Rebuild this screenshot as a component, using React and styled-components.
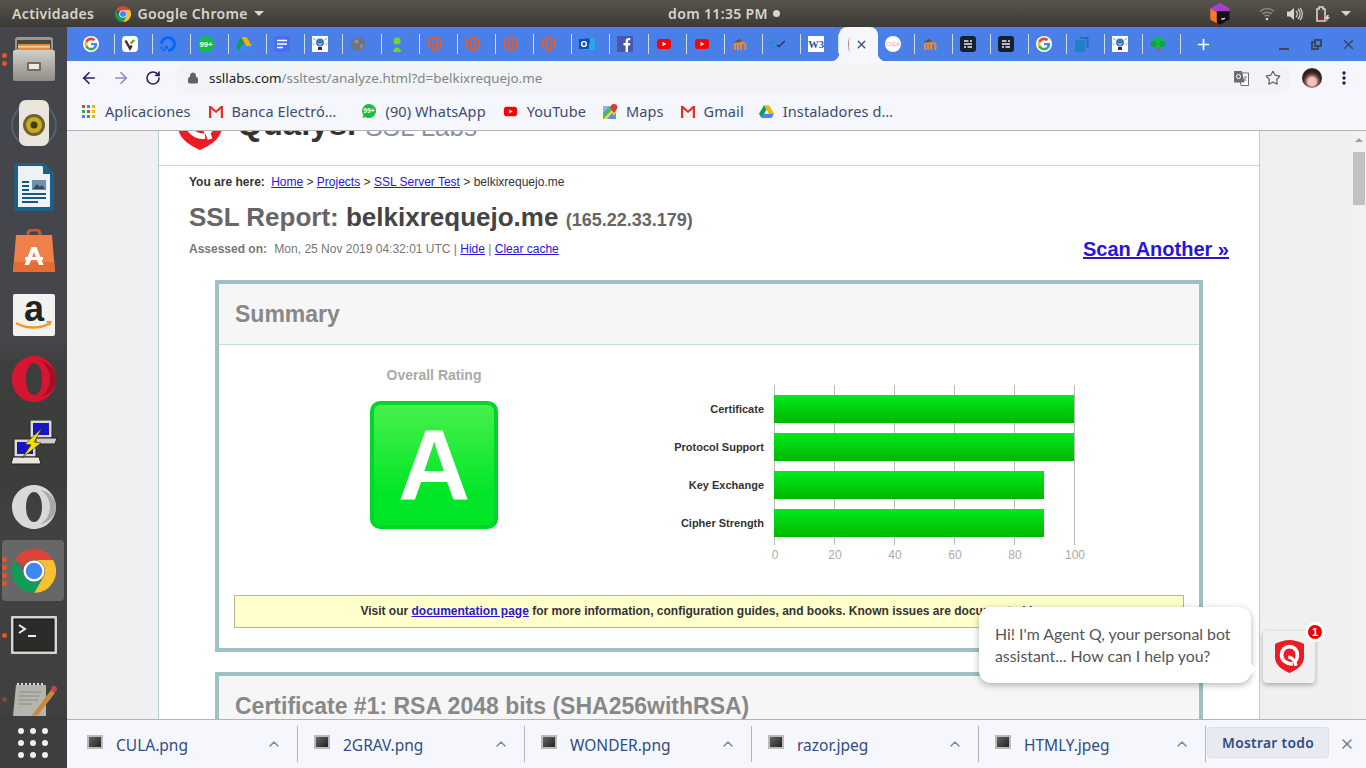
import React from 'react';
import styled, { createGlobalStyle } from 'styled-components';
import { ArrowLeft, ArrowRight, RotateCw, Lock, Star, X, Plus, ChevronUp } from 'lucide-react';
import { SiMagento, SiDigitalocean } from 'react-icons/si';

const GlobalStyle = createGlobalStyle`
  html, body { margin: 0; padding: 0; height: 100%; overflow: hidden; }
  #root { height: 100%; }
  * { box-sizing: border-box; }
`;

const UI_FONT = `"Noto Sans", "Open Sans", sans-serif`;
const PAGE_FONT = `"Liberation Sans", Arial, sans-serif`;

const Screen = styled.div`
  width: 1366px;
  height: 768px;
  display: grid;
  grid-template-columns: 67px 1fr;
  grid-template-rows: 27px 1fr;
  overflow: hidden;
  font-family: ${UI_FONT};
`;

/* ---------- gnome top bar ---------- */
const TopBar = styled.div`
  grid-column: 1 / 3;
  display: grid;
  grid-template-columns: 1fr auto 1fr;
  align-items: center;
  background: linear-gradient(#57544d, #3c3a36);
  color: #d9d5cb;
  font-size: 14px;
  font-weight: 600;
  letter-spacing: 0.35px;
`;
const TopLeft = styled.div`
  display: flex;
  align-items: center;
  padding-left: 12px;
`;
const AppMenu = styled.div`
  display: flex;
  align-items: center;
  gap: 6px;
  margin-left: 21px;
`;
const Caret = styled.span`
  width: 0;
  height: 0;
  border-left: 5px solid transparent;
  border-right: 5px solid transparent;
  border-top: 5px solid #d9d5cb;
`;
const Clock = styled.div`
  display: flex;
  align-items: center;
  gap: 5px;
  padding-left: 82px;
  &::after {
    content: '';
    width: 7px;
    height: 7px;
    border-radius: 50%;
    background: #d9d5cb;
  }
`;
const TopRight = styled.div`
  display: flex;
  justify-content: flex-end;
  align-items: center;
  padding-right: 15px;
`;
const Tray = styled.div`
  display: flex;
  margin-left: ${(p) => p.$ml || 0}px;
`;

/* ---------- launcher ---------- */
const Dock = styled.div`
  display: flex;
  flex-direction: column;
  background: linear-gradient(#45464c 0%, #45454c 42%, #3c3f3d 46%, #3b3d3a 60%, #434243 70%, #403f3f 100%);
  min-height: 0;
`;
const DockList = styled.div`
  flex: 1;
  min-height: 0;
  overflow: hidden;
`;
const DockItem = styled.div`
  position: relative;
  height: 64px;
  display: flex;
  align-items: center;
  justify-content: center;
  &::before {
    content: '';
    position: absolute;
    inset: 1px 3px 2px 2px;
    border-radius: 4px;
    background: ${(p) => (p.$active ? 'rgba(255,255,255,0.2)' : 'transparent')};
  }
  & > svg { position: relative; }
`;
const Pips = styled.div`
  position: absolute;
  left: 2px;
  top: 0;
  bottom: 0;
  display: flex;
  flex-direction: column;
  justify-content: center;
  gap: 3px;
`;
const Pip = styled.span`
  width: 5px;
  height: 5px;
  border-radius: 50%;
  background: #e95420;
  opacity: ${(p) => p.$dim || 1};
`;
const ShowApps = styled.div`
  height: 52px;
  flex: none;
  display: grid;
  grid-template-columns: repeat(3, 6px);
  gap: 6px;
  padding: 2px 0 0 18px;
  align-content: center;
  background: #3f3e3e;
`;
const AppDot = styled.span`
  width: 6px;
  height: 6px;
  border-radius: 50%;
  background: #eee;
`;

/* ---------- chrome ---------- */
const Browser = styled.div`
  display: flex;
  flex-direction: column;
  min-width: 0;
  min-height: 0;
`;
const TabStrip = styled.div`
  height: 34px;
  flex: none;
  background: #4a7fe8;
  display: flex;
  padding-left: 9.4px;
`;
const Tab = styled.div`
  position: relative;
  width: ${(p) => p.$w || 38.15}px;
  flex: none;
  display: flex;
  align-items: center;
  justify-content: center;
  padding-right: 8px;
  &::after {
    content: '';
    position: absolute;
    right: 0;
    top: 7px;
    width: 1px;
    height: 20px;
    background: #cddcf8;
  }
`;
const ActiveTab = styled.div`
  position: relative;
  width: 39px;
  flex: none;
  background: #f5f7fc;
  border-radius: 8px 8px 0 0;
  display: flex;
  align-items: center;
  padding-left: 9px;
  gap: 3px;
  color: #3d4a68;
  &::before, &::after {
    content: '';
    position: absolute;
    bottom: 0;
    width: 8px;
    height: 8px;
    background: radial-gradient(circle at 0 0, #4a7fe8 8px, #f5f7fc 8.5px);
  }
  &::before { left: -8px; }
  &::after { right: -8px; transform: scaleX(-1); }
`;
const CutIcon = styled.span`
  width: 4px;
  height: 15px;
  border-left: 1.5px solid #c08a80;
  border-radius: 50% 0 0 50%;
`;
const TabSpacer = styled.div`
  flex: 1;
`;
const NewTab = styled.div`
  width: 44px;
  display: flex;
  align-items: center;
  justify-content: center;
  color: #fff;
`;
const WindowButtons = styled.div`
  display: flex;
  align-items: center;
  gap: 16px;
  padding-right: 10px;
  color: #3a4763;
`;
const WinButton = styled.div`
  width: 16px;
  height: 16px;
  display: flex;
  align-items: center;
  justify-content: center;
`;
const MinLine = styled.span`
  width: 10px;
  height: 2px;
  margin-top: 9px;
  background: #3a4763;
`;

const Toolbar = styled.div`
  height: 33px;
  flex: none;
  background: #f5f7fc;
  display: flex;
  align-items: center;
  padding: 0 20px 0 6px;
  color: #2b1a5e;
`;
const NavButton = styled.div`
  width: 32px;
  display: flex;
  justify-content: center;
  color: ${(p) => p.$color || '#2b1a5e'};
`;
const Omnibox = styled.div`
  flex: 1;
  height: 28px;
  margin: 1px 0 0 6px;
  border-radius: 14px;
  background: #f1f3f4;
  display: flex;
  align-items: center;
  padding: 0 10px 0 12px;
`;
const Url = styled.div`
  flex: 1;
  margin-left: 10px;
  font-size: 13.4px;
  color: #80868b;
  white-space: nowrap;
  & b { font-weight: 400; color: #202124; }
`;
const OmniIcon = styled.div`
  margin-left: ${(p) => p.$ml || 14}px;
  display: flex;
  color: #5f6368;
`;
const Avatar = styled.div`
  width: 20px;
  height: 20px;
  margin-left: 11px;
  flex: none;
  border-radius: 50%;
  background: radial-gradient(circle at 50% 68%, #f0c3ba 0 24%, #a86f66 34%, #3a2624 52%, #2c1d1c 74%, #a08d8a 100%);
`;
const MenuDots = styled.div`
  margin-left: 20px;
  flex: none;
  display: flex;
  color: #2b1a5e;
`;

const Bookmarks = styled.div`
  height: 36px;
  flex: none;
  background: #f5f7fc;
  display: flex;
  align-items: center;
  padding: 0 0 2px 15px;
  font-size: 14.5px;
  letter-spacing: 0.1px;
  color: #3c4b72;
`;
const Bookmark = styled.div`
  display: flex;
  align-items: center;
  gap: ${(p) => p.$inner || 9}px;
  margin-right: ${(p) => p.$gap || 17}px;
  white-space: nowrap;
`;

/* ---------- page ---------- */
const Viewport = styled.div`
  flex: 1;
  min-height: 0;
  position: relative;
  display: grid;
  grid-template-columns: 91px 1102px 1fr 14px;
  border-top: 1px solid #b4b4b4;
  border-bottom: 1px solid #b4b4b4;
  background: #f0f0f0;
  overflow: hidden;
  font-family: ${PAGE_FONT};
`;
const Gutter = styled.div`
  background: #f0f0f0;
`;
const Sheet = styled.div`
  background: #fff;
  border-left: 1px solid #b3ced6;
  border-right: 1px solid #b3ced6;
`;
const Masthead = styled.div`
  height: 35px;
  border-bottom: 1px solid #c9d6da;
  overflow: hidden;
  display: flex;
  align-items: flex-start;
  padding-left: 19px;
`;
const LogoShield = styled.div`
  margin-top: -31px;
  flex: none;
`;
const QualysWord = styled.span`
  margin: -29px 0 0 15px;
  font-size: 33px;
  line-height: 44px;
  font-weight: 700;
  color: #333;
`;
const LabsWord = styled.span`
  margin: -22px 0 0 9px;
  font-size: 26px;
  line-height: 36px;
  color: #8793ad;
`;
const Content = styled.div`
  padding: 9px 30px 0;
  font-size: 12px;
`;
const Crumbs = styled.div`
  line-height: 14px;
  color: #333;
  & strong { margin-right: 3px; }
`;
const PageLink = styled.a`
  color: #2a14d8;
  text-decoration: underline;
`;
const ReportTitle = styled.h1`
  margin: 13px 0 0;
  font-size: 26px;
  line-height: 30px;
  font-weight: 700;
  color: #666;
  & b { color: #444; }
  & small { font-size: 18px; color: #666; }
`;
const AssessedRow = styled.div`
  display: flex;
  justify-content: space-between;
  align-items: flex-start;
  margin-top: 7px;
  line-height: 14px;
  color: #777;
  & strong { margin-right: 4px; }
`;
const ScanLink = styled(PageLink)`
  font-size: 20px;
  font-weight: 700;
  line-height: 24px;
  margin-top: -5px;
`;
const ReportBox = styled.section`
  width: 988px;
  margin: ${(p) => p.$top || 0}px 0 0 26px;
  border: 4px solid #9cc2c4;
  background: #fff;
`;
const BoxHeader = styled.div`
  height: 61px;
  padding: 0 16px;
  display: flex;
  align-items: center;
  background: #f6f6f6;
  border-bottom: 1px solid #c6dcdc;
  font-size: 23px;
  font-weight: 700;
  color: #888;
`;
const SummaryBody = styled.div`
  padding: 0 15px 20px;
`;
const SummaryRow = styled.div`
  height: 250px;
  display: flex;
  align-items: flex-start;
`;
const RatingColumn = styled.div`
  width: 400px;
  padding-top: 22px;
  display: flex;
  flex-direction: column;
  align-items: center;
  font-size: 14px;
  font-weight: 700;
  color: #aaa;
`;
const GradeBox = styled.div`
  width: 128px;
  height: 128px;
  margin-top: 18px;
  border: 4px solid #00d62a;
  border-radius: 10px;
  background: linear-gradient(#48f04c, #00e626 75%);
  color: #fff;
  font-size: 100px;
  line-height: 120px;
  text-align: center;
`;
const ChartWrap = styled.div`
  flex: none;
  margin-left: 16px;
  margin-top: 40px;
  display: flex;
`;
const Notice = styled.div`
  height: 33px;
  padding-bottom: 2px;
  border: 1px solid #b5b59c;
  background: #ffffcc;
  display: flex;
  align-items: center;
  justify-content: center;
  font-weight: 700;
  color: #333;
  white-space: nowrap;
`;

/* ---------- scrollbars, chat ---------- */
const Scrollbar = styled.div`
  position: relative;
  background: #f1f1f1;
  display: flex;
  flex-direction: column;
  align-items: center;
  justify-content: space-between;
  padding: 7px 0 6px;
`;
const ScrollThumb = styled.div`
  position: absolute;
  top: 21px;
  left: 1px;
  right: 1px;
  height: 53px;
  background: #c1c1c1;
`;
const ScrollArrow = styled.span`
  width: 0;
  height: 0;
  border-left: 4px solid transparent;
  border-right: 4px solid transparent;
  ${(p) => (p.$up ? 'border-bottom: 4px solid #a0a0a0;' : 'border-top: 4px solid #505050;')}
`;
const ChatLayer = styled.div`
  position: absolute;
  right: 51px;
  bottom: 36px;
  display: flex;
  align-items: flex-end;
  gap: 12px;
`;
const Bubble = styled.div`
  position: relative;
  width: 272px;
  height: 76px;
  padding: 16px 16px;
  background: #fff;
  border-radius: 12px;
  box-shadow: 0 2px 7px rgba(0, 0, 0, 0.3);
  font-family: Lato, sans-serif;
  font-size: 15.85px;
  line-height: 22px;
  color: #555;
  white-space: nowrap;
  &::after {
    content: '';
    position: absolute;
    right: -6px;
    top: 56px;
    width: 0;
    height: 0;
    border-top: 6px solid transparent;
    border-bottom: 6px solid transparent;
    border-left: 7px solid #fff;
  }
`;
const BotButton = styled.div`
  position: relative;
  width: 52px;
  height: 52px;
  border-radius: 4px;
  background: #f0f0f0;
  box-shadow: 0 2px 5px rgba(0, 0, 0, 0.3);
  display: flex;
  align-items: center;
  justify-content: center;
`;
const Badge = styled.span`
  position: absolute;
  top: -9px;
  right: -10px;
  width: 20px;
  height: 20px;
  border-radius: 50%;
  border: 3px solid #fff;
  background: #f00000;
  color: #fff;
  font-family: ${PAGE_FONT};
  font-size: 11px;
  font-weight: 700;
  line-height: 14px;
  text-align: center;
`;

/* ---------- download shelf ---------- */
const Shelf = styled.div`
  height: 48px;
  flex: none;
  background: #f5f7fc;
  display: flex;
  align-items: center;
  padding-left: 4px;
  font-size: 15.5px;
  color: #2f4d86;
`;
const Download = styled.div`
  width: 227px;
  height: 36px;
  flex: none;
  display: flex;
  align-items: center;
  padding: 0 15px 0 16px;
  border-right: 1px solid #b3b3cc;
`;
const FileThumb = styled.span`
  width: 16px;
  height: 14px;
  flex: none;
  margin: -4px 13px 0 0;
  border: 2px solid #bbb;
  background: linear-gradient(135deg, #666, #222);
`;
const FileName = styled.span`
  flex: 1;
  padding-top: 2px;
`;
const ShowAll = styled.div`
  width: 122px;
  height: 31px;
  margin: -3px 0 0 1px;
  flex: none;
  border: 1px solid #dfe1e8;
  border-radius: 3px;
  background: #e8eaf1;
  display: flex;
  align-items: center;
  justify-content: center;
  font-size: 13.8px;
  font-weight: 600;
  letter-spacing: 0.3px;
  color: #2f4d86;
`;
const ShelfClose = styled.div`
  margin-left: 10px;
  display: flex;
  color: #6b7a9c;
`;

/* ---------- drawings ---------- */
const GoogleG = () => (
  <svg width="16" height="16" viewBox="-6 -6 60 60">
    <circle cx="24" cy="24" r="30" fill="#fff" />
    <path fill="#EA4335" d="M24 9.5c3.54 0 6.71 1.22 9.21 3.6l6.85-6.85C35.9 2.38 30.47 0 24 0 14.62 0 6.51 5.38 2.56 13.22l7.98 6.19C12.43 13.72 17.74 9.5 24 9.5z" />
    <path fill="#4285F4" d="M46.98 24.55c0-1.57-.15-3.09-.38-4.55H24v9.02h12.94c-.58 2.96-2.26 5.48-4.78 7.18l7.73 6c4.51-4.18 7.09-10.36 7.09-17.65z" />
    <path fill="#FBBC05" d="M10.53 28.59c-.48-1.45-.76-2.99-.76-4.59s.27-3.14.76-4.59l-7.98-6.19C.92 16.46 0 20.12 0 24c0 3.88.92 7.54 2.56 10.78l7.97-6.19z" />
    <path fill="#34A853" d="M24 48c6.48 0 11.93-2.13 15.89-5.81l-7.73-6c-2.15 1.45-4.92 2.3-8.16 2.3-6.26 0-11.57-4.22-13.47-9.91l-7.98 6.19C6.51 42.62 14.62 48 24 48z" />
  </svg>
);
const ChromeLogo = ({ size = 16 }) => (
  <svg width={size} height={size} viewBox="0 0 48 48">
    <path fill="#db4437" d="M24 0A24 24 0 0 1 44.8 12H24a12 12 0 0 0-10.4 6L3.2 12A24 24 0 0 1 24 0z" />
    <path fill="#fbc02d" d="M44.8 12A24 24 0 0 1 24 48L34.4 30A12 12 0 0 0 24 12z" />
    <path fill="#0f9d58" d="M3.2 12A24 24 0 0 0 24 48L34.4 30A12 12 0 0 1 13.6 30z" />
    <circle cx="24" cy="24" r="11.5" fill="#fff" />
    <circle cx="24" cy="24" r="9" fill="#4285f4" />
  </svg>
);
const VivaldiIcon = () => (
  <svg width="16" height="16" viewBox="0 0 16 16">
    <rect width="16" height="16" rx="4" fill="#fff" />
    <path d="M3.5 4.5 8 12.5l1.6-3" fill="none" stroke="#4a2a22" strokeWidth="2.4" />
    <path d="M8.6 7.5 12.3 4" fill="none" stroke="#6aa02c" strokeWidth="2.4" />
  </svg>
);
const WhatsAppBadge = ({ size = 16 }) => (
  <svg width={size} height={size} viewBox="0 0 16 16">
    <path d="M8 0a8 8 0 1 1-4 14.9L.6 16l1-3.4A8 8 0 0 1 8 0z" fill="#0dc143" />
    <text x="8" y="10.8" textAnchor="middle" fontSize="7.6" fontWeight="700" fontFamily="Liberation Sans" fill="#fff">99+</text>
  </svg>
);
const DriveIcon = ({ size = 16 }) => (
  <svg width={size} height={size} viewBox="0 0 24 24">
    <path d="M8 2h8l8 13.5h-8z" fill="#f4b400" />
    <path d="M8 2 0 15.5l4 7 8-13.5z" fill="#0f9d58" />
    <path d="M4 22.5l4-7h16l-4 7z" fill="#4285f4" />
  </svg>
);
const DocsIcon = () => (
  <svg width="16" height="16" viewBox="0 0 16 16">
    <rect width="16" height="16" rx="1.5" fill="#4a6cf0" />
    <path d="M3 4.5h10M3 8h10M3 11.5h6" stroke="#fff" strokeWidth="1.6" />
  </svg>
);
const BulbIcon = () => (
  <svg width="16" height="16" viewBox="0 0 16 16">
    <rect width="16" height="16" fill="#fff" />
    <circle cx="8" cy="6.5" r="4" fill="#3f74c8" />
    <path d="M6 7l2 2 2-2" stroke="#cfe0f8" fill="none" />
    <rect x="6" y="11" width="4" height="3" fill="#333" />
    <path d="M1.5 2.5l2 1.5M14.5 2.5l-2 1.5M1 8h1.5M15 8h-1.5" stroke="#555" strokeWidth="0.8" />
  </svg>
);
const GlobeIcon = () => (
  <svg width="16" height="16" viewBox="0 0 16 16">
    <circle cx="8" cy="8" r="7" fill="#6f7480" />
    <path d="M5 4c2-1 4 0 4 2S6 8 5 7 4 5 5 4zM10 9l3-1-1 4-2 1z" fill="#8e929b" />
  </svg>
);
const PersonIcon = () => (
  <svg width="16" height="16" viewBox="0 0 16 16">
    <circle cx="8" cy="5" r="3.6" fill="#6fd62a" />
    <path d="M4 16c0-3 2-4.5 4-4.5s4 1.500 4 4.500z" fill="#6fd62a" />
  </svg>
);
const Magento = () => <SiMagento size={16} color="#ee5b1f" />;
const OutlookIcon = () => (
  <svg width="16" height="16" viewBox="0 0 16 16">
    <path d="M6 2h10v12H6z" fill="#28a8ea" />
    <path d="M6 2h5v6H6z" fill="#0078d4" />
    <rect y="3" width="10" height="10" rx="1" fill="#0f4fb8" />
    <circle cx="5" cy="8" r="2.4" fill="none" stroke="#fff" strokeWidth="1.4" />
  </svg>
);
const FacebookIcon = () => (
  <svg width="16" height="16" viewBox="0 0 16 16">
    <rect width="16" height="16" fill="#4a55b0" />
    <path d="M11 16V9.500h2l.3-2.500H11V5.500c0-.8.3-1.200 1.200-1.200h1.100V2.100C12.900 2 12.300 2 11.600 2 9.800 2 8.600 3 8.600 5.100V7H6.500v2.500h2.100V16z" fill="#fff" />
  </svg>
);
const YouTubeIcon = ({ size = 16 }) => (
  <svg width={size} height={size} viewBox="0 0 16 16">
    <rect x="1" y="3" width="14" height="10" rx="3" fill="#f00" />
    <path d="M6.500 5.800v4.400L10.300 8z" fill="#fff" />
  </svg>
);
const MoodleIcon = () => (
  <svg width="16" height="16" viewBox="0 0 16 16">
    <path d="M2 6l5-3 3 1.500-5 2.500z" fill="#555" />
    <path d="M3 14V9c0-1.500 2-2 3-1 1-1.200 3-1 3 .5V14M9 9c0-1.600 2-2.400 3.400-1.600.9.500 1.100 1.200 1.100 2.100V14M6 8.500V14" fill="none" stroke="#f6891f" strokeWidth="2" />
  </svg>
);
const CheckLoop = () => (
  <svg width="16" height="16" viewBox="0 0 16 16">
    <path d="M5 6a3 3 0 1 0 0 5c2 0 2-2 3-2.500" fill="none" stroke="#1f8ac0" strokeWidth="1.300" />
    <path d="M7 9l2 1.500L15 5" fill="none" stroke="#2a3a5a" strokeWidth="1.500" />
  </svg>
);
const W3Icon = () => (
  <svg width="16" height="16" viewBox="0 0 16 16">
    <rect width="16" height="16" fill="#fff" />
    <text x="8" y="12" textAnchor="middle" fontSize="10.500" fontWeight="700" fontFamily="Liberation Serif" fill="#1d5a9c">W3</text>
  </svg>
);
const CulaIcon = () => (
  <svg width="16" height="16" viewBox="0 0 16 16">
    <circle cx="8" cy="8" r="8" fill="#fff" />
    <text x="8" y="9.800" textAnchor="middle" fontSize="5" fontFamily="Liberation Sans" fill="#f08a96">CULA</text>
  </svg>
);
const SlatIcon = () => (
  <svg width="16" height="16" viewBox="0 0 16 16">
    <rect width="16" height="16" rx="3" fill="#14202e" />
    <path d="M4 5h4.500M10 5h2M4 8h8M4 11h2M7.500 11h4.500" stroke="#eef" strokeWidth="1.300" />
  </svg>
);
const PagesIcon = () => (
  <svg width="16" height="16" viewBox="0 0 16 16">
    <path d="M5.500 1h9v11h-2V3h-7z" fill="#1f72b8" />
    <rect x="1" y="4" width="10" height="12" rx="2" fill="#1f80c8" />
  </svg>
);
const TreeIcon = () => (
  <svg width="16" height="16" viewBox="0 0 16 16">
    <path d="M7 10h2.500v6H7z" fill="#a5662d" />
    <circle cx="8" cy="6" r="5.500" fill="#10b84a" />
    <circle cx="3.500" cy="8" r="3" fill="#0fa23f" />
    <circle cx="12.500" cy="8" r="3" fill="#0fa23f" />
  </svg>
);
const GmailIcon = () => (
  <svg width="14" height="13" viewBox="0 0 14 13">
    <rect y="1" width="14" height="12" fill="#f2f2f2" />
    <path d="M0 1h2.200v12H0zM11.800 1H14v12h-2.200z" fill="#d9352b" />
    <path d="M0 1h2L7 5.500 12 1h2v1.500L7 8 0 2.500z" fill="#d9352b" />
  </svg>
);
const MapsIcon = () => (
  <svg width="15" height="15" viewBox="0 0 15 15">
    <rect y="2" width="13" height="13" fill="#4fb56b" />
    <path d="M0 15 13 2v7l-6 6z" fill="#f3d34a" />
    <path d="M4 15 9 9l4 6z" fill="#5c8fe8" />
    <path d="M0 2h7L0 9z" fill="#8ab4f8" />
    <path d="M11 0a3.300 3.300 0 0 1 3.300 3.300C14.300 5.500 11 9 11 9S7.700 5.500 7.700 3.300A3.300 3.300 0 0 1 11 0z" fill="#db3b32" />
  </svg>
);
const AppsGrid = () => {
  const cols = ['#e0453a', '#4285f4', '#f4b400', '#34a853', '#ea4335', '#fbbc05', '#4285f4', '#34a853', '#f4b400'];
  return (
    <svg width="13" height="13" viewBox="0 0 13 13">
      {cols.map((c, i) => (
        <rect key={i} x={(i % 3) * 5} y={Math.floor(i / 3) * 5} width="3" height="3" fill={c} />
      ))}
    </svg>
  );
};
const TranslateIcon = () => (
  <svg width="16" height="16" viewBox="0 0 16 16">
    <path d="M6 3h9.500v12.500H8z" fill="#fff" stroke="#6b6f75" />
    <path d="M1 1h8l2.500 11.500H1z" fill="#6b6f75" />
    <circle cx="5.500" cy="6.500" r="2" fill="none" stroke="#fff" strokeWidth="1" />
    <path d="M11 7h3M12.500 7c0 2-1 3.500-2 4.500M11 8.500c.5 1 1.500 2 2.500 2.500" stroke="#6b6f75" fill="none" strokeWidth="0.800" />
  </svg>
);
const KebabIcon = () => (
  <svg width="4" height="14" viewBox="0 0 4 14" fill="currentColor">
    <circle cx="2" cy="2" r="1.700" />
    <circle cx="2" cy="7" r="1.700" />
    <circle cx="2" cy="12" r="1.700" />
  </svg>
);
const JetBrainsCube = () => (
  <svg width="20" height="22" viewBox="0 0 21 24">
    <path d="M10.500 0 21 6v12l-10.500 6L0 18V6z" fill="#d02fa0" />
    <path d="M0 6l10.500 6v12L0 18z" fill="#f77a1c" />
    <path d="M10.500 0 21 6l-10.500 6L0 6z" fill="#a040d0" />
    <path d="M7 9h14v9l-10.500 6L7 22z" fill="#111" />
    <path d="M12 17l4-1v1.500l-4 1z" fill="#eee" />
  </svg>
);
const WifiIcon = () => (
  <svg width="16" height="14" viewBox="0 0 16 14" fill="none" stroke="#8d8b85" strokeWidth="1.400">
    <path d="M1 4.500a10 10 0 0 1 14 0" />
    <path d="M3.300 7a7 7 0 0 1 9.400 0" />
    <path d="M5.500 9.300a3.800 3.800 0 0 1 5 0" />
    <circle cx="8" cy="12" r="1.300" fill="#d9d5cb" stroke="none" />
  </svg>
);
const VolumeIcon = () => (
  <svg width="16" height="14" viewBox="0 0 16 14">
    <path d="M0 4.500h3L7 1v12L3 9.500H0z" fill="#d9d5cb" />
    <path d="M9 4a4 4 0 0 1 0 6M11 2a7 7 0 0 1 0 10M13 .800a9.500 9.500 0 0 1 0 12.400" fill="none" stroke="#d9d5cb" strokeWidth="1.200" />
  </svg>
);
const BatteryIcon = () => (
  <svg width="14" height="16" viewBox="0 0 14 16">
    <path d="M1 3h2V1h4v2h2v12H1z" fill="none" stroke="#d9d5cb" strokeWidth="1.600" />
    <rect x="2.500" y="11.500" width="5" height="2" fill="#c01818" />
    <path d="M11 9l-2 4h2l-1 3 4-5h-2l1-2z" fill="#d9d5cb" />
  </svg>
);
const RestoreIcon = () => (
  <svg width="11" height="11" viewBox="0 0 11 11" fill="none" stroke="#3a4763" strokeWidth="2">
    <rect x="4" y="1" width="6" height="6" />
    <path d="M3 3H1v7h6V8" />
  </svg>
);

const FilesDock = () => (
  <svg width="42" height="44" viewBox="0 0 42 44">
    <defs>
      <linearGradient id="cabinet" x1="0" y1="0" x2="0" y2="1">
        <stop offset="0" stopColor="#d0cec8" />
        <stop offset="1" stopColor="#8f8d86" />
      </linearGradient>
    </defs>
    <rect x="2" y="0" width="38" height="14" rx="3" fill="#9a9892" />
    <rect x="4" y="3" width="34" height="9" fill="#4a4641" />
    <rect x="5" y="7" width="32" height="6" fill="#e98a3a" />
    <rect x="5" y="9" width="32" height="1.500" fill="#f7d4a4" />
    <rect x="0" y="13" width="42" height="31" rx="2" fill="url(#cabinet)" />
    <rect x="14" y="25" width="14" height="9" rx="1" fill="#6f6c66" />
    <rect x="16" y="27" width="10" height="5" fill="#eceae5" />
  </svg>
);
const SpeakerDock = () => (
  <svg width="48" height="46" viewBox="0 0 48 46">
    <circle cx="24" cy="25" r="22" fill="none" stroke="#55606e" strokeWidth="2" />
    <rect x="9" y="0" width="30" height="46" rx="7" fill="#e9e5db" />
    <circle cx="24" cy="25" r="11" fill="#6d6232" />
    <circle cx="24" cy="25" r="8" fill="#c9ab1c" />
    <circle cx="24" cy="25" r="3.500" fill="#3e3920" />
  </svg>
);
const WriterDock = () => (
  <svg width="40" height="48" viewBox="0 0 40 48">
    <path d="M3 0h27l10 10v35a3 3 0 0 1-3 3H3a3 3 0 0 1-3-3V3a3 3 0 0 1 3-3z" fill="#1d5f87" />
    <path d="M4 3h24l8 8v33H4z" fill="#eef2f5" />
    <path d="M29 0h1l10 10v1H29z" fill="#1d5f87" />
    <rect x="18" y="17" width="14" height="10" fill="#6d93ad" />
    <path d="M19 26l4-5 3 3 2-2 3 4z" fill="#3d4a55" />
    <path d="M8 19h7M8 23h7M8 27h7M8 31h24M8 35h24M8 39h16" stroke="#17587f" strokeWidth="2" />
  </svg>
);
const StoreDock = () => (
  <svg width="42" height="44" viewBox="0 0 42 44">
    <path d="M15 8V5a4 4 0 0 1 4-4h4a4 4 0 0 1 4 4v3" fill="none" stroke="#c85a24" strokeWidth="3" />
    <path d="M3 6h36l3 37H0z" fill="#ef8049" />
    <path d="M1 33h40l1 10H0z" fill="#e56d33" />
    <path d="M18.500 18h5l7 18h-4.500l-5-13-5 13H11.500z" fill="#fff" />
    <rect x="12" y="28" width="18" height="3" fill="#fff" />
  </svg>
);
const AmazonDock = () => (
  <svg width="42" height="42" viewBox="0 0 42 42">
    <rect width="42" height="42" rx="2" fill="#f2f2f0" />
    <text x="21" y="27" textAnchor="middle" fontSize="36" fontWeight="700" fontFamily="Liberation Sans" fill="#222">a</text>
    <path d="M3 29c10 6 25 6 34 0" fill="none" stroke="#f7981d" strokeWidth="2.500" />
    <path d="M33 27h6l-2 5z" fill="#f7981d" />
  </svg>
);
const OperaDock = () => (
  <svg width="44" height="46" viewBox="0 0 44 46">
    <path fillRule="evenodd" d="M22 0c12 0 22 10 22 23S34 46 22 46 0 36 0 23 10 0 22 0zm0 7c-5 0-8 7-8 16s3 16 8 16 8-7 8-16-3-16-8-16z" fill="#d81530" />
    <path d="M28 5c6 3 10 10 10 18s-4 15-10 18c8-1 16-9 16-18S36 6 28 5z" fill="#a40f24" />
  </svg>
);
const NetworkDock = () => (
  <svg width="46" height="46" viewBox="0 0 46 46">
    <rect x="19" y="0" width="22" height="18" fill="#dddad2" stroke="#222" />
    <rect x="22" y="3" width="16" height="12" fill="#1616c8" />
    <path d="M20 18h26l-2 6H18z" fill="#cfccc4" stroke="#222" />
    <rect x="3" y="19" width="22" height="18" fill="#dddad2" stroke="#222" />
    <rect x="6" y="22" width="16" height="12" fill="#1616c8" />
    <path d="M2 37h26l2 7H0z" fill="#e8e5dd" stroke="#222" />
    <path d="M31 8 14 24l6 1-9 13 19-15-7-1z" fill="#f3e000" stroke="#222" strokeWidth="0.600" />
  </svg>
);
const OperaGrayDock = () => (
  <svg width="44" height="44" viewBox="0 0 44 44">
    <path fillRule="evenodd" d="M22 0c12 0 22 10 22 22S34 44 22 44 0 34 0 22 10 0 22 0zm0 7c-5 0-8 7-8 15s3 15 8 15 8-7 8-15-3-15-8-15z" fill="#d8d8d8" />
    <path d="M28 5c6 3 10 9 10 17s-4 14-10 17c8-1 16-8 16-17S36 6 28 5z" fill="#a8a8a8" />
  </svg>
);
const TerminalDock = () => (
  <svg width="46" height="38" viewBox="0 0 46 38">
    <rect width="46" height="38" rx="1" fill="#d5d5d0" />
    <rect x="3" y="3" width="40" height="32" fill="#2b2b29" stroke="#111" />
    <path d="M8 9l6 4-6 4" fill="none" stroke="#eee" strokeWidth="2" />
    <path d="M17 20h8" stroke="#eee" strokeWidth="2" />
  </svg>
);
const NotesDock = () => (
  <svg width="46" height="34" viewBox="0 0 46 34">
    <path d="M5 3h30v31H2z" fill="#b5b5ad" />
    <path d="M7 3v-2M11 3v-2M15 3v-2M19 3v-2M23 3v-2M27 3v-2M31 3v-2" stroke="#ddd" strokeWidth="2" />
    <path d="M8 10h22M8 14h20M7 18h20M7 22h14" stroke="#888" />
    <path d="M22 32 40 8l4 3-17 22-6 1z" fill="#c58a3c" />
    <circle cx="43" cy="7" r="3" fill="#c9444a" />
  </svg>
);

const QualysShield = ({ size = 44 }) => (
  <svg width={size} height={size * 1.14} viewBox="0 0 44 50">
    <path d="M22 0C29 0 38 3 44 6v20c0 12-11 19-22 24C11 45 0 38 0 26V6C6 3 15 0 22 0z" fill="#ed1c24" />
    <path d="M27 36C18 37 10 31 10 22.500 10 15 15.500 10 22 10s12 5 12 12.500c0 5-2 8-4 10" fill="none" stroke="#fff" strokeWidth="5.500" />
    <path d="M20 26c6 0 10 6 12 13" fill="none" stroke="#fff" strokeWidth="5" />
  </svg>
);

const GRID_X = [0, 20, 40, 60, 80, 100];
const BARS = [
  { label: 'Certificate', value: 100 },
  { label: 'Protocol Support', value: 100 },
  { label: 'Key Exchange', value: 90 },
  { label: 'Cipher Strength', value: 90 },
];
const RatingChart = () => (
  <svg width="460" height="180" viewBox="0 0 460 180" fontFamily="Liberation Sans">
    <defs>
      <linearGradient id="barFill" x1="0" y1="0" x2="0" y2="1">
        <stop offset="0" stopColor="#00ea1c" />
        <stop offset="1" stopColor="#00b700" />
      </linearGradient>
    </defs>
    {GRID_X.map((v) => (
      <g key={v}>
        <rect x={124.5 + v * 3 - 0.5} y="0" width="1" height="160" fill="#bbb" />
        <text x={125 + v * 3} y="174" textAnchor="middle" fontSize="12" fill="#aaa">{v}</text>
      </g>
    ))}
    {BARS.map((b, i) => (
      <g key={b.label}>
        <rect x="124" y={10 + i * 38} width={b.value * 3} height="28" fill="url(#barFill)" />
        <text x="114" y={28 + i * 38} textAnchor="end" fontSize="11" fontWeight="700" fill="#333">{b.label}</text>
      </g>
    ))}
  </svg>
);

const TABS = [
  GoogleG, VivaldiIcon, () => <SiDigitalocean size={16} color="#0069ff" />, WhatsAppBadge, DriveIcon, DocsIcon, BulbIcon, GlobeIcon, PersonIcon,
  Magento, Magento, Magento, Magento, OutlookIcon, FacebookIcon, YouTubeIcon, YouTubeIcon, MoodleIcon, CheckLoop, W3Icon,
];
const TABS_AFTER = [CulaIcon, MoodleIcon, SlatIcon, SlatIcon, GoogleG, PagesIcon, BulbIcon, TreeIcon];
const DOWNLOADS = ['CULA.png', '2GRAV.png', 'WONDER.png', 'razor.jpeg', 'HTMLY.jpeg'];
const DOCK = [
  { Icon: FilesDock, pips: 2 },
  { Icon: SpeakerDock },
  { Icon: WriterDock },
  { Icon: StoreDock },
  { Icon: AmazonDock },
  { Icon: OperaDock },
  { Icon: NetworkDock },
  { Icon: OperaGrayDock },
  { Icon: () => <ChromeLogo size={44} />, pips: 4, active: true },
  { Icon: TerminalDock, pips: 1 },
  { Icon: NotesDock, pips: 1, dim: 0.4 },
];

export default function App() {
  return (
    <>
      <GlobalStyle />
      <Screen>
        <TopBar>
          <TopLeft>
            <span>Actividades</span>
            <AppMenu>
              <ChromeLogo />
              <span>Google Chrome</span>
              <Caret />
            </AppMenu>
          </TopLeft>
          <Clock>dom 11:35 PM</Clock>
          <TopRight>
            <JetBrainsCube />
            <Tray $ml={29}>
              <WifiIcon />
            </Tray>
            <Tray $ml={12}>
              <VolumeIcon />
            </Tray>
            <Tray $ml={13}>
              <BatteryIcon />
            </Tray>
            <Tray $ml={11}>
              <Caret />
            </Tray>
          </TopRight>
        </TopBar>

        <Dock>
          <DockList>
            {DOCK.map(({ Icon, pips, active, dim }, i) => (
              <DockItem key={i} $active={active}>
                {pips && (
                  <Pips>
                    {Array.from({ length: pips }).map((_, k) => (
                      <Pip key={k} $dim={dim} />
                    ))}
                  </Pips>
                )}
                <Icon />
              </DockItem>
            ))}
          </DockList>
          <ShowApps>
            {Array.from({ length: 9 }).map((_, i) => (
              <AppDot key={i} />
            ))}
          </ShowApps>
        </Dock>

        <Browser>
          <TabStrip>
            {TABS.map((Icon, i) => (
              <Tab key={i}>
                <Icon />
              </Tab>
            ))}
            <ActiveTab>
              <CutIcon />
              <X size={13} strokeWidth={2.4} />
            </ActiveTab>
            {TABS_AFTER.map((Icon, i) => (
              <Tab key={i} $w={i === 0 ? 37 : 38}>
                <Icon />
              </Tab>
            ))}
            <NewTab>
              <Plus size={17} strokeWidth={2.4} />
            </NewTab>
            <TabSpacer />
            <WindowButtons>
              <WinButton>
                <MinLine />
              </WinButton>
              <WinButton>
                <RestoreIcon />
              </WinButton>
              <WinButton>
                <X size={15} strokeWidth={2.6} />
              </WinButton>
            </WindowButtons>
          </TabStrip>

          <Toolbar>
            <NavButton>
              <ArrowLeft size={18} strokeWidth={2.2} />
            </NavButton>
            <NavButton $color="#8f8ac0">
              <ArrowRight size={18} strokeWidth={2.2} />
            </NavButton>
            <NavButton>
              <RotateCw size={16} strokeWidth={2.4} />
            </NavButton>
            <Omnibox>
              <Lock size={12} color="#5f6368" fill="#5f6368" />
              <Url>
                <b>ssllabs.com</b>/ssltest/analyze.html?d=belkixrequejo.me
              </Url>
              <OmniIcon>
                <TranslateIcon />
              </OmniIcon>
              <OmniIcon $ml={16}>
                <Star size={16} strokeWidth={1.8} />
              </OmniIcon>
            </Omnibox>
            <Avatar />
            <MenuDots>
              <KebabIcon />
            </MenuDots>
          </Toolbar>

          <Bookmarks>
            <Bookmark $gap={18} $inner={10}>
              <AppsGrid />
              Aplicaciones
            </Bookmark>
            <Bookmark $gap={26}>
              <GmailIcon />
              Banca Electró…
            </Bookmark>
            <Bookmark $gap={17}>
              <WhatsAppBadge size={14} />
              (90) WhatsApp
            </Bookmark>
            <Bookmark>
              <YouTubeIcon size={15} />
              YouTube
            </Bookmark>
            <Bookmark $inner={8}>
              <MapsIcon />
              Maps
            </Bookmark>
            <Bookmark $gap={15}>
              <GmailIcon />
              Gmail
            </Bookmark>
            <Bookmark>
              <DriveIcon size={15} />
              Instaladores d…
            </Bookmark>
          </Bookmarks>

          <Viewport>
            <Gutter />
            <Sheet>
              <Masthead>
                <LogoShield>
                  <QualysShield />
                </LogoShield>
                <QualysWord>Qualys.</QualysWord>
                <LabsWord>SSL Labs</LabsWord>
              </Masthead>
              <Content>
                <Crumbs>
                  <strong>You are here:</strong> <PageLink>Home</PageLink> &gt; <PageLink>Projects</PageLink> &gt;{' '}
                  <PageLink>SSL Server Test</PageLink> &gt; belkixrequejo.me
                </Crumbs>
                <ReportTitle>
                  SSL Report: <b>belkixrequejo.me</b> <small>(165.22.33.179)</small>
                </ReportTitle>
                <AssessedRow>
                  <div>
                    <strong>Assessed on:</strong> Mon, 25 Nov 2019 04:32:01 UTC | <PageLink>Hide</PageLink> |{' '}
                    <PageLink>Clear cache</PageLink>
                  </div>
                  <ScanLink>Scan Another »</ScanLink>
                </AssessedRow>
                <ReportBox $top={19}>
                  <BoxHeader>Summary</BoxHeader>
                  <SummaryBody>
                    <SummaryRow>
                      <RatingColumn>
                        Overall Rating
                        <GradeBox>A</GradeBox>
                      </RatingColumn>
                      <ChartWrap>
                        <RatingChart />
                      </ChartWrap>
                    </SummaryRow>
                    <Notice>
                      <span>
                        Visit our <PageLink>documentation page</PageLink> for more information, configuration guides, and
                        books. Known issues are documented <PageLink>here</PageLink>.
                      </span>
                    </Notice>
                  </SummaryBody>
                </ReportBox>
                <ReportBox $top={20}>
                  <BoxHeader>Certificate #1: RSA 2048 bits (SHA256withRSA)</BoxHeader>
                </ReportBox>
              </Content>
            </Sheet>
            <Gutter />
            <Scrollbar>
              <ScrollArrow $up />
              <ScrollThumb />
              <ScrollArrow />
            </Scrollbar>
            <ChatLayer>
              <Bubble>
                Hi! I'm Agent Q, your personal bot
                <br />
                assistant... How can I help you?
              </Bubble>
              <BotButton>
                <QualysShield size={29} />
                <Badge>1</Badge>
              </BotButton>
            </ChatLayer>
          </Viewport>

          <Shelf>
            {DOWNLOADS.map((name) => (
              <Download key={name}>
                <FileThumb />
                <FileName>{name}</FileName>
                <ChevronUp size={16} color="#7d8ba8" strokeWidth={2.2} />
              </Download>
            ))}
            <ShowAll>Mostrar todo</ShowAll>
            <ShelfClose>
              <X size={16} strokeWidth={2.2} />
            </ShelfClose>
          </Shelf>
        </Browser>
      </Screen>
    </>
  );
}
